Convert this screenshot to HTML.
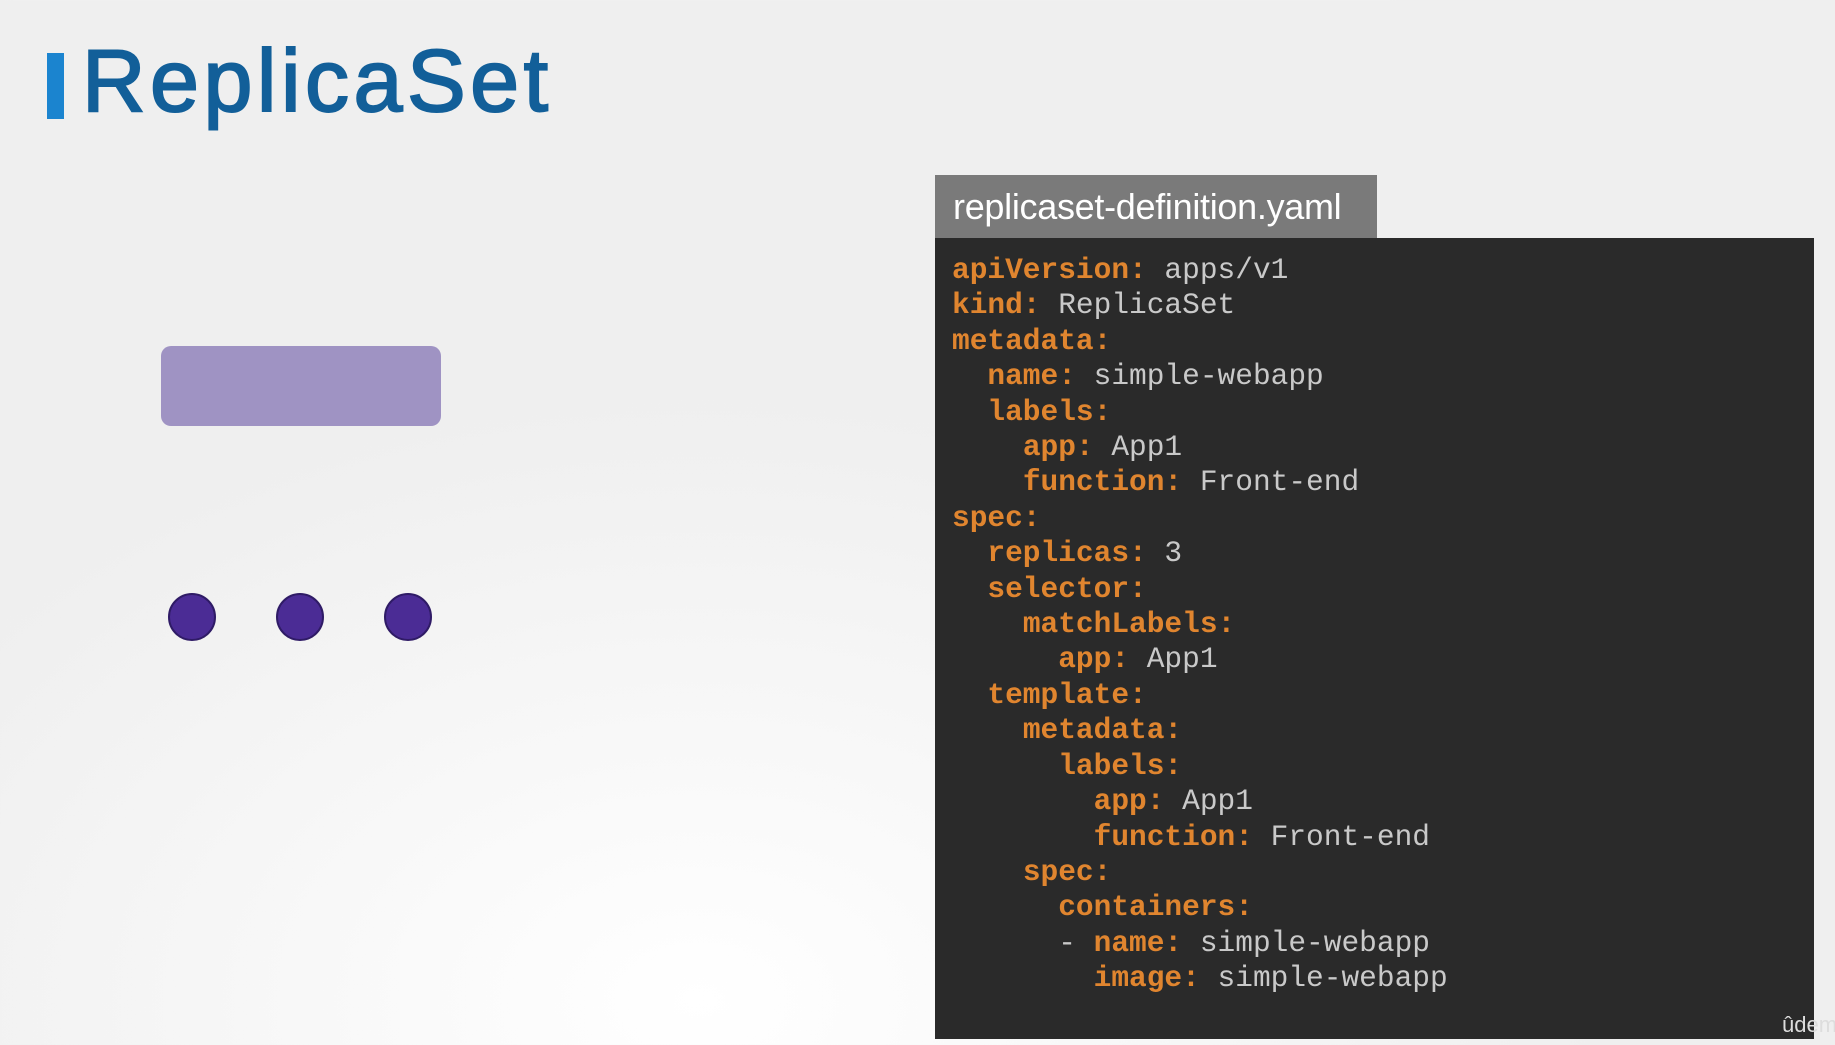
<!DOCTYPE html>
<html><head><meta charset="utf-8"><style>
html,body{margin:0;padding:0}
body{width:1835px;height:1045px;overflow:hidden;position:relative;
background:radial-gradient(ellipse 900px 600px at 700px 1000px,#ffffff 0%,#f7f7f7 50%,#efefef 100%);
font-family:"Liberation Sans",sans-serif}
.bar{position:absolute;left:47px;top:53px;width:17px;height:66px;background:#1b84cf}
.title{position:absolute;left:82px;top:26px;font-size:88px;font-weight:normal;-webkit-text-stroke:2px #125f99;color:#125f99;letter-spacing:4.5px;line-height:110px}
.rect{position:absolute;left:161px;top:346px;width:280px;height:80px;border-radius:10px;background:#9f93c3}
.dot{position:absolute;top:593px;width:44px;height:44px;border-radius:50%;background:#4b2c95;border:2px solid #2f1b66}
.tab{position:absolute;left:935px;top:175px;width:442px;height:63px;background:#7a7a7a;color:#fff;font-size:36px;line-height:63px;padding-left:18px;box-sizing:border-box;letter-spacing:-0.3px}
.panel{position:absolute;left:935px;top:238px;width:879px;height:801px;background:#2a2a2a}
pre{position:absolute;left:952px;top:253px;margin:0;font-family:"Liberation Mono",monospace;font-size:29.5px;line-height:35.4px;color:#c9c9c9}
b{color:#e0852f}
.ud{position:absolute;left:1782px;top:1012px;color:#ddd;font-size:22px}
</style></head><body>
<div class="bar"></div>
<div class="title">ReplicaSet</div>
<div class="rect"></div>
<div class="dot" style="left:168px"></div>
<div class="dot" style="left:276px"></div>
<div class="dot" style="left:384px"></div>
<div class="tab">replicaset-definition.yaml</div>
<div class="panel"></div>
<pre><b>apiVersion:</b> apps/v1
<b>kind:</b> ReplicaSet
<b>metadata:</b>
  <b>name:</b> simple-webapp
  <b>labels:</b>
    <b>app:</b> App1
    <b>function:</b> Front-end
<b>spec:</b>
  <b>replicas:</b> 3
  <b>selector:</b>
    <b>matchLabels:</b>
      <b>app:</b> App1
  <b>template:</b>
    <b>metadata:</b>
      <b>labels:</b>
        <b>app:</b> App1
        <b>function:</b> Front-end
    <b>spec:</b>
      <b>containers:</b>
      - <b>name:</b> simple-webapp
        <b>image:</b> simple-webapp</pre>
<div class="ud">ûdem</div>
</body></html>
